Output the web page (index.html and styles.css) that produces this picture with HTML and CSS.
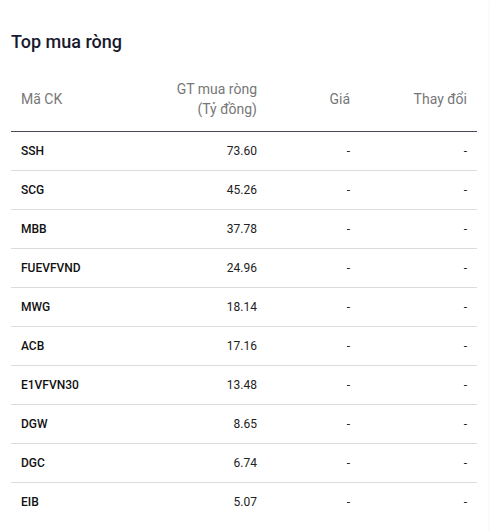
FILE: index.html
```html
<!DOCTYPE html>
<html lang="vi">
<head>
<meta charset="utf-8">
<link rel="stylesheet" href="styles.css">
</head>
<body>
<div class="card">
  <h2 class="title">Top mua ròng</h2>
  <table class="tbl">
    <colgroup>
      <col class="c1"><col class="c2"><col class="c3"><col class="c4">
    </colgroup>
    <thead>
      <tr>
        <th class="left">Mã CK</th>
        <th>GT mua ròng<br>(Tỷ đồng)</th>
        <th>Giá</th>
        <th>Thay đổi</th>
      </tr>
    </thead>
    <tbody>
      <tr><td class="sym">SSH</td><td>73.60</td><td>-</td><td>-</td></tr>
      <tr><td class="sym">SCG</td><td>45.26</td><td>-</td><td>-</td></tr>
      <tr><td class="sym">MBB</td><td>37.78</td><td>-</td><td>-</td></tr>
      <tr><td class="sym">FUEVFVND</td><td>24.96</td><td>-</td><td>-</td></tr>
      <tr><td class="sym">MWG</td><td>18.14</td><td>-</td><td>-</td></tr>
      <tr><td class="sym">ACB</td><td>17.16</td><td>-</td><td>-</td></tr>
      <tr><td class="sym">E1VFVN30</td><td>13.48</td><td>-</td><td>-</td></tr>
      <tr><td class="sym">DGW</td><td>8.65</td><td>-</td><td>-</td></tr>
      <tr><td class="sym">DGC</td><td>6.74</td><td>-</td><td>-</td></tr>
      <tr class="last"><td class="sym">EIB</td><td>5.07</td><td>-</td><td>-</td></tr>
    </tbody>
  </table>
</div>
</body>
</html>
```
FILE: styles.css
```css
html, body {
  margin: 0;
  padding: 0;
  background: #ffffff;
}
body {
  font-family: Roboto, "Noto Sans", "Liberation Sans", sans-serif;
  color: #1a1a1a;
}
.card {
  width: 488px;
  box-sizing: border-box;
  padding: 30px 11px 12px 11px;
  background: #fff;
  box-shadow: 1px 0 3px rgba(0, 0, 0, 0.03);
}
.title {
  margin: 0;
  font-size: 18px;
  line-height: 24px;
  font-weight: 500;
  color: #171a2e;
}
.tbl {
  margin-top: 17px;
  width: 466px;
  border-collapse: collapse;
  table-layout: fixed;
}
.c1 { width: 150px; }
.c2 { width: 106px; }
.c3 { width: 93px; }
.c4 { width: 117px; }
th {
  font-weight: 400;
  font-size: 14px;
  line-height: 20px;
  color: #777777;
  text-align: right;
  padding: 8px 10px 12px 10px;
  border-bottom: 1px solid #4a4a55;
}
th.left, td.sym { text-align: left; }
td {
  font-size: 12px;
  height: 38px;
  padding: 0 10px;
  text-align: right;
  color: #222;
  border-bottom: 1px solid #dcdcdc;
}
td.sym {
  font-weight: 500;
  color: #111;
}
tr.last td { border-bottom: none; }
```
